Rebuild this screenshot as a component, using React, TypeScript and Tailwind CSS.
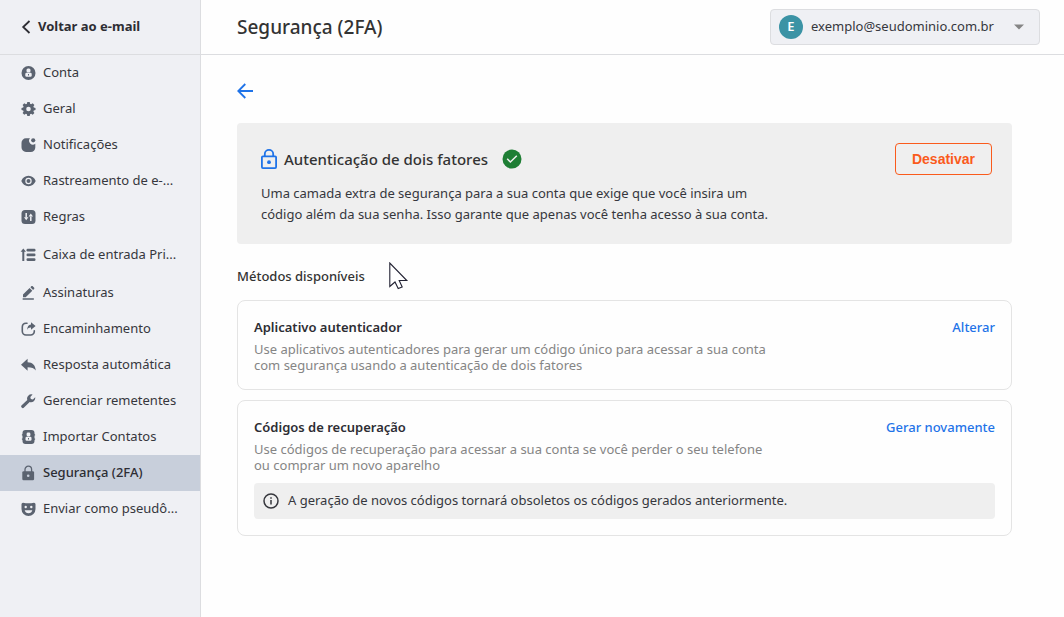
import React from 'react';

type IconProps = { children: React.ReactNode; className?: string };

const Icon: React.FC<IconProps> = ({ children, className = 'size-4' }) => (
  <svg viewBox="0 0 16 16" fill="currentColor" className={`${className} shrink-0`} aria-hidden="true">
    {children}
  </svg>
);

const knockout = '#eff0f4';

const icons = {
  account: (
    <>
      <circle cx="8.5" cy="8" r="7" />
      <rect x="6.5" y="3.4" width="4" height="4.2" rx="1.5" fill={knockout} />
      <rect x="5.3" y="7.8" width="6.4" height="4" rx="1.2" fill={knockout} />
      <path d="M8 9h1v1.400H8z" />
    </>
  ),
  gear: (
    <path
      fillRule="evenodd"
      d="M7.3 1h2.4l.4 1.8 1 .4 1.6-1 1.7 1.7-1 1.6.4 1 1.7.4v2.2l-1.7.4-.4 1 1 1.6-1.7 1.7-1.6-1-1 .4-.4 1.8H7.3l-.4-1.8-1-.4-1.6 1-1.7-1.7 1-1.6-.4-1-1.7-.4V6.900l1.700-.4.4-1-1-1.600 1.700-1.700 1.600 1 1-.4zM8.500 5.700a2.300 2.300 0 1 0 0 4.600 2.300 2.300 0 0 0 0-4.600z"
    />
  ),
  notification: (
    <>
      <path d="M10 1.300H6A4.500 4.500 0 0 0 1.500 6v4.300A4.600 4.600 0 0 0 6 15h4.800a4.500 4.500 0 0 0 4.500-4.500V6.700A3.800 3.800 0 0 1 10 1.300z" />
      <circle cx="13.200" cy="3.300" r="2.100" />
    </>
  ),
  eye: (
    <>
      <path d="M8.500 2.800C5 2.800 2.500 5 1.300 8c1.200 3 3.700 5.200 7.200 5.200S14.500 11 15.700 8c-1.200-3-3.700-5.200-7.200-5.200z" />
      <circle cx="8.500" cy="8" r="2.600" fill="none" stroke={knockout} strokeWidth="1.200" />
    </>
  ),
  rules: (
    <>
      <rect x="1.500" y="1" width="14" height="14" rx="3.500" />
      <path d="M6.200 4v4.500M10.800 7.500V12" stroke={knockout} strokeWidth="1.500" />
      <path d="M4 8.300h4.400l-2.200 2.900zM8.600 7.400H13l-2.200-2.900z" fill={knockout} />
    </>
  ),
  priority: (
    <>
      <path d="M3.300 1.500 6 4.800H4.300V14h-2V4.800H.6z" />
      <rect x="6.500" y="1.700" width="9" height="2.700" rx="1.200" />
      <rect x="6.500" y="6.500" width="9" height="2.700" rx="1.200" />
      <rect x="6.500" y="11.300" width="9" height="2.700" rx="1.200" />
    </>
  ),
  pen: (
    <>
      <path d="M3 9.600 9.600 3l2.700 2.700L5.700 12.300H3zM10.400 2.200l1.100-1.100q.5-.4 1 0L14.200 2.800q.4.500 0 1l-1.100 1.100z" />
      <rect x="2.500" y="13.200" width="11.500" height="1.500" rx=".6" />
    </>
  ),
  forward: (
    <>
      <path
        d="M7 2.300H6A3.800 3.800 0 0 0 2.300 6v4.200A3.800 3.800 0 0 0 6 14h4.600a3.600 3.600 0 0 0 3.700-3.600V9.800"
        fill="none"
        stroke="currentColor"
        strokeWidth="1.600"
        strokeLinecap="round"
      />
      <path d="M11 1.200 15.600 5 11 8.800V6.600C9 6.500 8 7.300 7.200 9c0-3.400 1.300-5.200 3.800-5.500z" />
    </>
  ),
  reply: <path d="M7.600 1.800v3.500c5 .2 7.700 2.900 8.200 8.300-1.800-2.500-4-3.400-8.200-3.400v3.600L1 7.800z" />,
  wrench: (
    <path d="M15.200 4.300 12.900 6.500l-2.100-.5-.5-2.100L12.600 1.500A4.300 4.300 0 0 0 7.300 7L1.700 12.300a1.600 1.600 0 0 0 2.300 2.300L9.700 9.100a4.300 4.300 0 0 0 5.500-4.800z" />
  ),
  contacts: (
    <>
      <path d="M5.500 1h6a3 3 0 0 1 3 3v1.300h.6v1.200h-.6v3h.6v1.200h-.6V12a3 3 0 0 1-3 3h-6a3 3 0 0 1-3-3v-1.300h-.6V9.500h.6v-3h-.6V5.300h.6V4a3 3 0 0 1 3-3z" />
      <rect x="6.600" y="3.500" width="3.800" height="4" rx="1.400" fill={knockout} />
      <rect x="5.500" y="7.800" width="6" height="4" rx="1.200" fill={knockout} />
      <path d="M8 9h1v1.400H8z" />
    </>
  ),
  lock: (
    <>
      <path d="M5 7V4.500a3.300 3.300 0 0 1 6.600 0V7" fill="none" stroke="currentColor" strokeWidth="1.300" />
      <rect x="2.300" y="6.200" width="11.800" height="9" rx="1.300" />
      <circle cx="8.200" cy="10.700" r="1.300" fill="#c8cfdb" />
    </>
  ),
  mask: (
    <>
      <path d="M3 1.700q5.500 1 11 0a1.500 1.500 0 0 1 1.500 1.500V8a7 7 0 0 1-14 0V3.200A1.500 1.500 0 0 1 3 1.700z" />
      <circle cx="5.700" cy="6" r="1.200" fill={knockout} />
      <circle cx="11.300" cy="6" r="1.200" fill={knockout} />
      <path d="M4.700 9.200h7.600q-.7 3-3.800 3t-3.800-3z" fill={knockout} />
    </>
  ),
};

type NavItem = { label: string; icon: React.ReactNode; tall?: boolean; active?: boolean };

const navItems: NavItem[] = [
  { label: 'Conta', icon: icons.account },
  { label: 'Geral', icon: icons.gear },
  { label: 'Notificações', icon: icons.notification },
  { label: 'Rastreamento de e-...', icon: icons.eye },
  { label: 'Regras', icon: icons.rules },
  { label: 'Caixa de entrada Pri...', icon: icons.priority, tall: true },
  { label: 'Assinaturas', icon: icons.pen },
  { label: 'Encaminhamento', icon: icons.forward },
  { label: 'Resposta automática', icon: icons.reply },
  { label: 'Gerenciar remetentes', icon: icons.wrench },
  { label: 'Importar Contatos', icon: icons.contacts },
  { label: 'Segurança (2FA)', icon: icons.lock, active: true },
  { label: 'Enviar como pseudô...', icon: icons.mask },
];

const Sidebar = () => (
  <aside className="w-[201px] shrink-0 border-r border-[#dcdde0] bg-[#eff0f4]">
    <a
      href="#inbox"
      className="flex h-[55px] items-center gap-1.5 border-b border-[#dcdde0] pl-5 text-[13px] font-bold text-[#2d2d33]"
    >
      <svg viewBox="0 0 12 16" className="h-4 w-3" fill="none" stroke="currentColor" strokeWidth="1.800" aria-hidden="true">
        <path d="M9.500 2 3.200 8l6.300 6" />
      </svg>
      Voltar ao e-mail
    </a>
    <nav>
      {navItems.map((item) => (
        <a
          key={item.label}
          href="#"
          aria-current={item.active ? 'page' : undefined}
          className={`flex items-center gap-[7px] pl-5 text-[13px] whitespace-nowrap ${item.tall ? 'h-10' : 'h-9'} ${
            item.active ? 'bg-[#c8cfdb] font-medium text-[#2d2d33]' : 'text-[#36373d]'
          }`}
        >
          <span className="text-[#5b6370]">
            <Icon>{item.icon}</Icon>
          </span>
          {item.label}
        </a>
      ))}
    </nav>
  </aside>
);

const Header = () => (
  <header className="flex h-[55px] items-center justify-between border-b border-[#dcdde0] pr-6 pl-9">
    <h1 className="text-[19px] font-medium text-[#333]">Segurança (2FA)</h1>
    <div className="flex h-9 w-[270px] items-center gap-2 rounded border border-[#dcdde0] bg-[#eff0f4] pr-3 pl-2">
      <span className="flex size-6 shrink-0 items-center justify-center rounded-full bg-[#3b93a5] text-[13px] font-semibold text-white">
        E
      </span>
      <select aria-label="Conta de e-mail" className="min-w-0 flex-1 appearance-none bg-transparent text-[13px] text-[#36373d]">
        <option>exemplo@seudominio.com.br</option>
      </select>
      <svg viewBox="0 0 16 16" className="size-4 shrink-0" fill="#858585" aria-hidden="true">
        <path d="M3 5.500h10l-5 5z" />
      </svg>
    </div>
  </header>
);

type MethodCardProps = { title: string; description: string; action: string; children?: React.ReactNode };

const MethodCard: React.FC<MethodCardProps> = ({ title, description, action, children }) => (
  <section className="rounded-lg border border-[#e4e4e4] p-4">
    <div className="flex items-start justify-between gap-4">
      <div>
        <h3 className="text-[13px] leading-5 font-semibold text-[#2d2d33]">{title}</h3>
        <p className="mt-1 max-w-[520px] text-[13px] leading-4 text-[#858585]">{description}</p>
      </div>
      <button type="button" className="shrink-0 text-[13px] leading-5 font-medium text-[#1f73e8]">
        {action}
      </button>
    </div>
    {children}
  </section>
);

export default function App() {
  return (
    <div className="flex min-h-screen bg-[#fefefe] font-['Noto_Sans','Open_Sans',sans-serif]">
      <Sidebar />
      <div className="min-w-0 flex-1">
        <Header />
        <main className="pt-7 pr-[52px] pb-10 pl-9">
          <button type="button" aria-label="Voltar" className="mb-6 block size-4 text-[#1f73e8]">
            <svg viewBox="0 0 16 16" className="size-4" fill="none" stroke="currentColor" strokeWidth="1.800">
              <path d="M16 8H1.500M8.300 1 1.300 8l7 7" />
            </svg>
          </button>

          <section className="rounded bg-[#efefef] pt-5 pr-5 pb-[19px] pl-6">
            <div className="flex h-8 items-center">
              <svg viewBox="0 0 16 20" className="mr-[7px] h-5 w-4 text-[#1f73e8]" fill="none" stroke="currentColor" strokeWidth="1.800" aria-hidden="true">
                <rect x=".9" y="7.300" width="14.200" height="11.800" rx="1" />
                <path d="M3.800 7.300V4.900a4.200 4 0 0 1 8.400 0v2.400" />
                <circle cx="8" cy="13.200" r="1.900" fill="currentColor" stroke="none" />
              </svg>
              <h2 className="text-[15px] font-medium text-[#333]">Autenticação de dois fatores</h2>
              <svg viewBox="0 0 20 20" className="ml-3.5 size-5" aria-label="Ativado">
                <circle cx="10" cy="10" r="9.500" fill="#1e7e34" />
                <path d="m5.200 9.800 3.200 3.200 6.400-6.200" fill="none" stroke="#efefef" strokeWidth="1.500" />
              </svg>
              <button
                type="button"
                className="ml-auto h-8 rounded border border-[#fa5b1c] px-4 font-['Liberation_Sans',sans-serif] text-[14px] font-bold text-[#fa5b1c]"
              >
                Desativar
              </button>
            </div>
            <p className="mt-2 max-w-[520px] text-[13px] leading-[21px] text-[#36373d]">
              Uma camada extra de segurança para a sua conta que exige que você insira um código além da sua senha. Isso
              garante que apenas você tenha acesso à sua conta.
            </p>
          </section>

          <div className="mt-6 mb-4 flex">
            <h2 className="relative text-[13px] leading-4 font-medium text-[#333]">
              Métodos disponíveis
              {/* Mouse pointer */}
              <svg viewBox="0 0 20 28" className="absolute -top-1.5 left-full ml-6 h-7 w-5" fill="#fff" stroke="#222233" strokeWidth="1.100" aria-hidden="true">
                <path d="M.8 1v23.500L6 20l3.200 6.600 4-1.600-3-6.500h7.600z" />
              </svg>
            </h2>
          </div>

          <div className="flex flex-col gap-2.5">
            <MethodCard
              title="Aplicativo autenticador"
              description="Use aplicativos autenticadores para gerar um código único para acessar a sua conta com segurança usando a autenticação de dois fatores"
              action="Alterar"
            />
            <MethodCard
              title="Códigos de recuperação"
              description="Use códigos de recuperação para acessar a sua conta se você perder o seu telefone ou comprar um novo aparelho"
              action="Gerar novamente"
            >
              <p className="mt-2.5 flex h-9 items-center gap-2 rounded bg-[#efefef] px-2 text-[13px] text-[#36373d]">
                <svg viewBox="0 0 18 18" className="size-[18px]" fill="none" stroke="currentColor" strokeWidth="1.500" aria-hidden="true">
                  <circle cx="9" cy="9" r="7" />
                  <path d="M9 8v4.500M9 5.200v1.500" />
                </svg>
                A geração de novos códigos tornará obsoletos os códigos gerados anteriormente.
              </p>
            </MethodCard>
          </div>
        </main>
      </div>
    </div>
  );
}
